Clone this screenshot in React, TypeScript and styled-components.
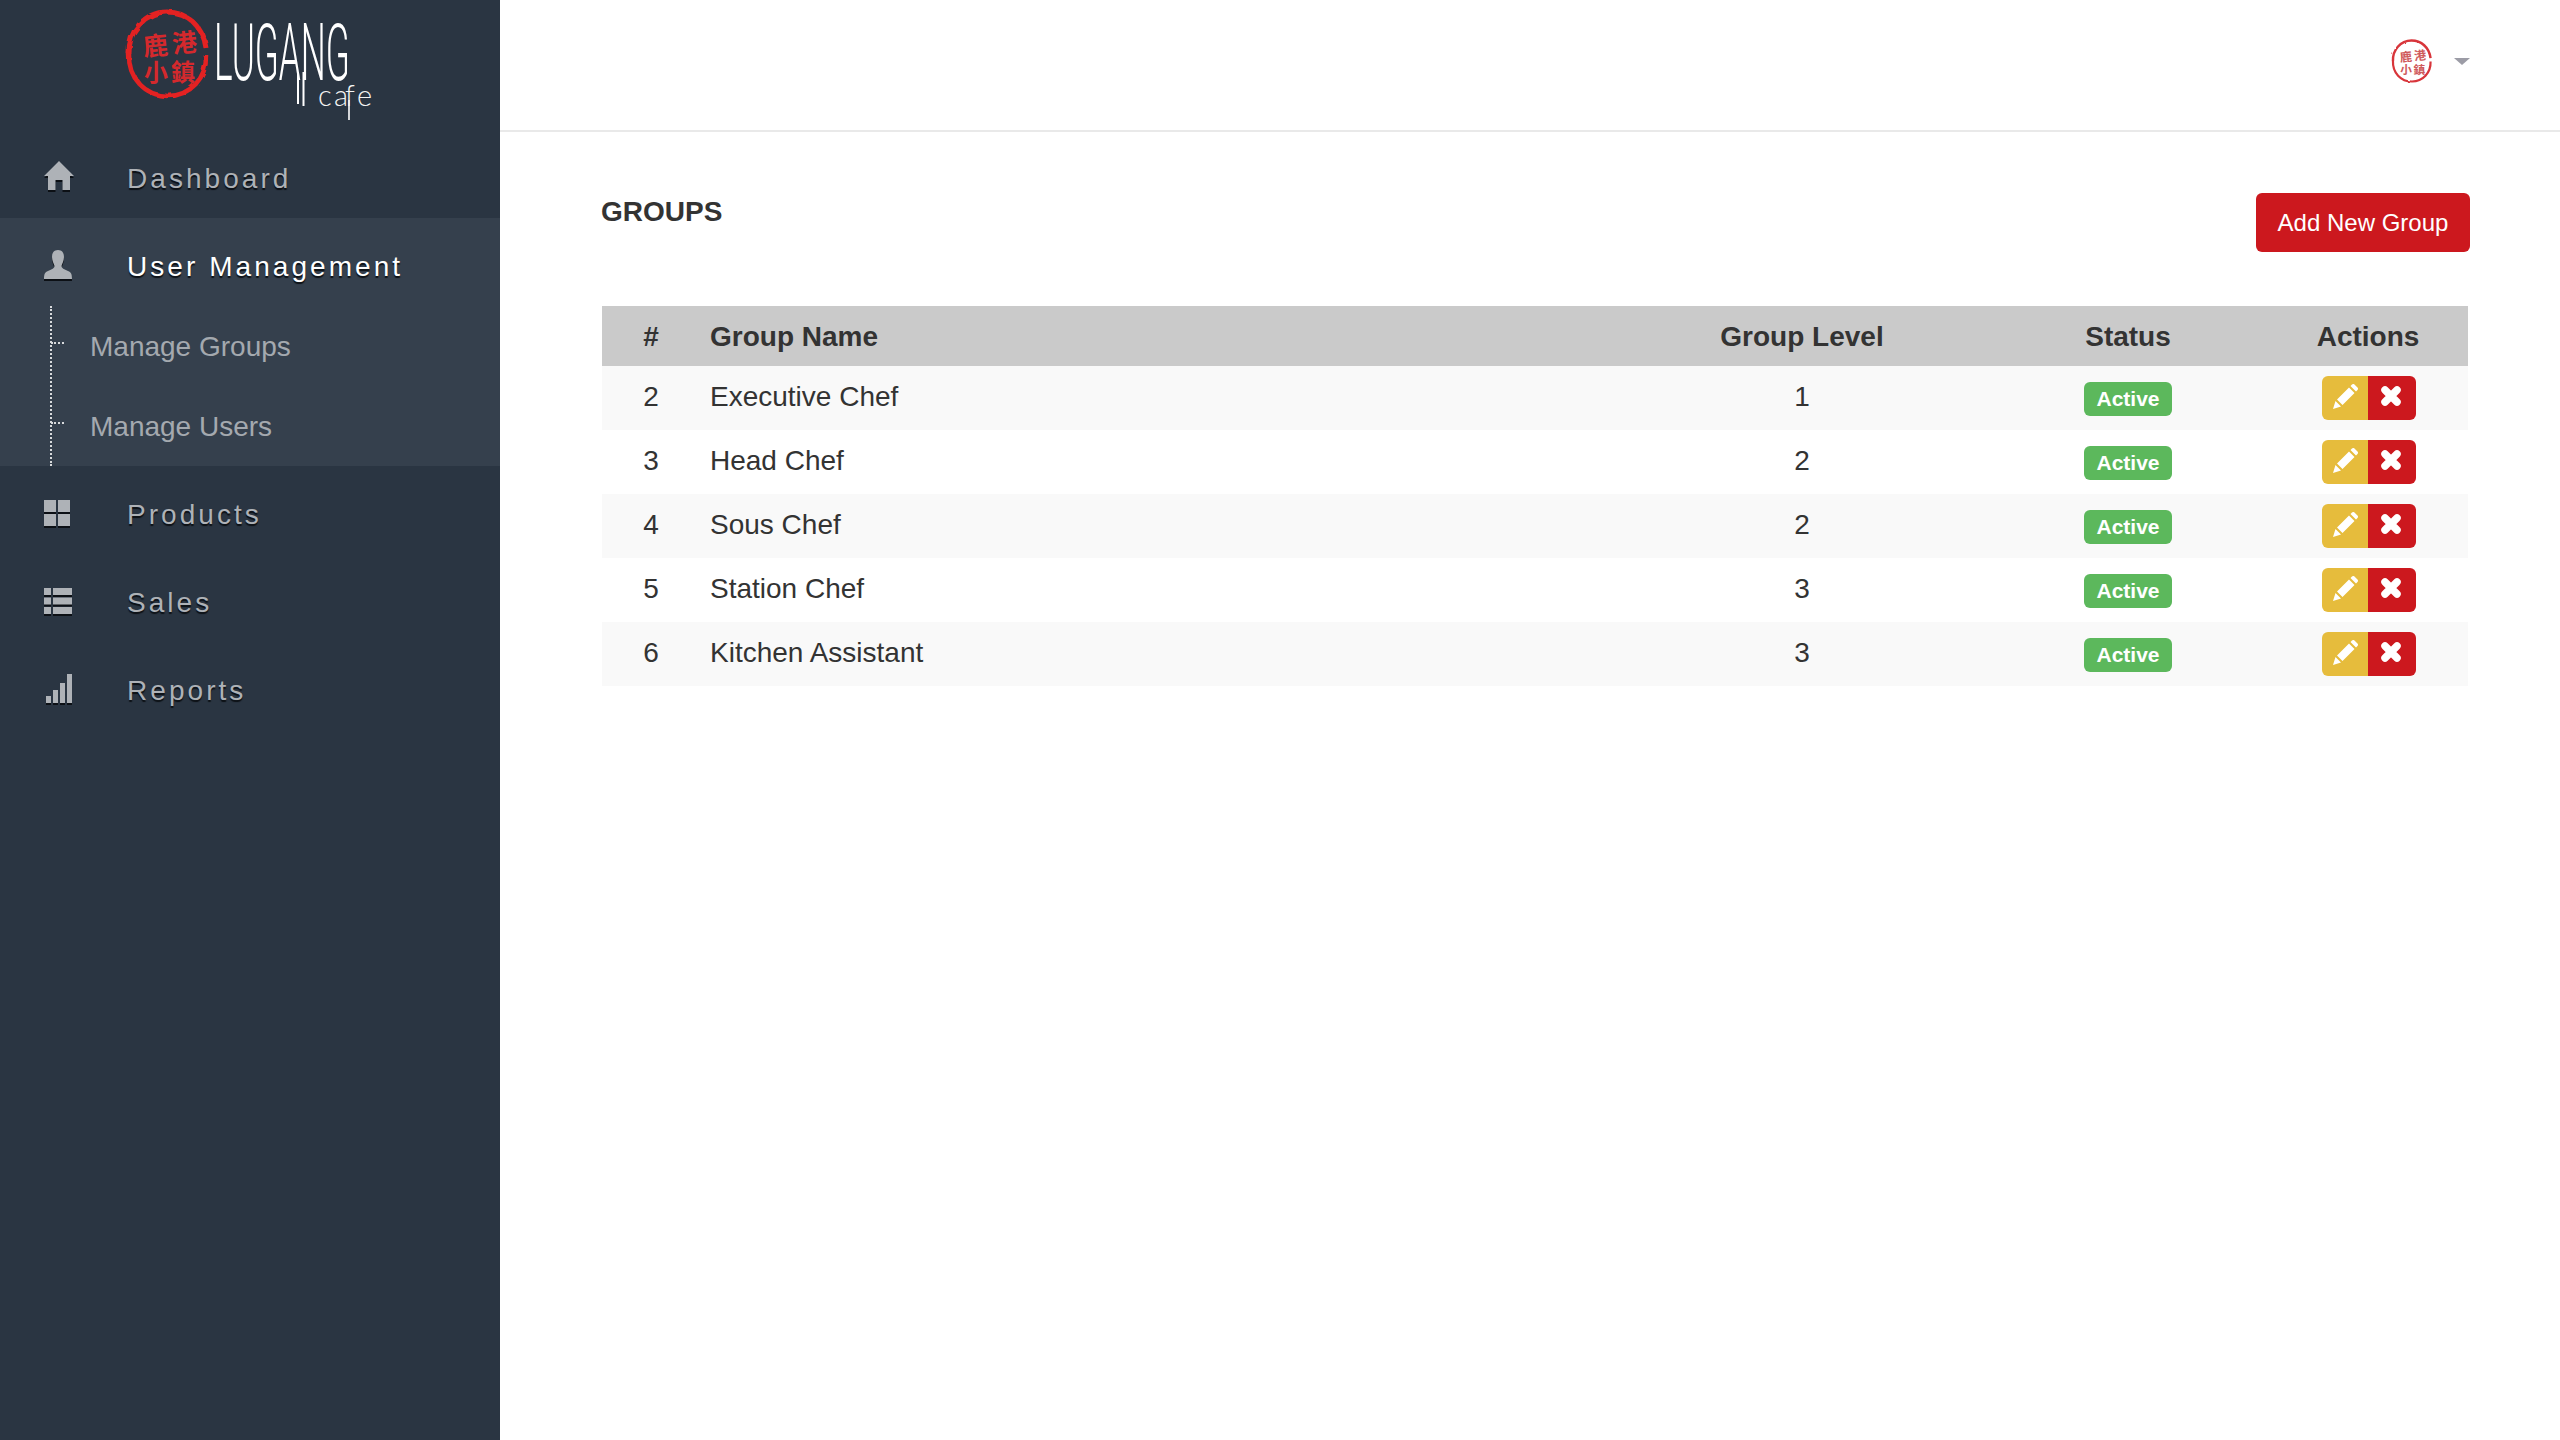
import React from "react";
import styled, { createGlobalStyle } from "styled-components";

const Global = createGlobalStyle`
  html, body { margin: 0; padding: 0; background: #fff; }
  body { font-family: "Liberation Sans", Arial, sans-serif; color: #333; }
  * { box-sizing: border-box; }
`;

const Page = styled.div`
  display: flex;
  width: 100%;
  min-height: 100vh;
`;

const Sidebar = styled.aside`
  flex: 0 0 500px;
  background: #2a3542;
`;

const LogoBar = styled.div`
  height: 130px;
  padding-top: 8px;
  display: flex;
  justify-content: center;
  align-items: flex-start;
  svg {
    overflow: visible;
  }
`;

const NavList = styled.nav`
  display: flex;
  flex-direction: column;
`;

const NavGroup = styled.div<{ $open?: boolean }>`
  background: ${(p) => (p.$open ? "#35404d" : "transparent")};
`;

const NavItem = styled.div<{ $active?: boolean }>`
  height: 88px;
  padding: 31px 0 21px 44px;
  display: flex;
  align-items: center;
  font-size: 28px;
  line-height: 36px;
  letter-spacing: 3.05px;
  color: ${(p) => (p.$active ? "#ffffff" : "#aeb2b7")};
  text-shadow: 0 2px 1px #0c1015;
`;

const IconSlot = styled.span<{ $lift: number }>`
  flex: 0 0 83px;
  display: flex;
  align-items: center;
  padding-bottom: ${(p) => p.$lift * 2}px;
  svg {
    display: block;
    fill: #aeb2b7;
    filter: drop-shadow(0 2px 0 #0c1015);
  }
`;

const SubList = styled.div`
  position: relative;
  padding-left: 90px;
  &::before {
    content: "";
    position: absolute;
    left: 50px;
    top: 0;
    bottom: 0;
    border-left: 2px dotted #d8dadc;
  }
`;

const SubItem = styled.div`
  position: relative;
  height: 80px;
  padding-top: 2px;
  display: flex;
  align-items: center;
  font-size: 28px;
  color: #a4a9af;
  &::before {
    content: "";
    position: absolute;
    left: -39px;
    top: 36px;
    width: 13px;
    border-top: 2px dotted #d8dadc;
  }
`;

const Main = styled.main`
  flex: 1;
  min-width: 0;
  display: flex;
  flex-direction: column;
`;

const TopBar = styled.header`
  height: 132px;
  padding: 0 90px 8px 0;
  display: flex;
  align-items: center;
  justify-content: flex-end;
  gap: 21px;
  border-bottom: 2px solid #e9e9e9;
`;

const Caret = styled.span`
  width: 0;
  height: 0;
  border-left: 8px solid transparent;
  border-right: 8px solid transparent;
  border-top: 7px solid #9c9ca6;
`;

const Content = styled.section`
  padding: 61px 90px 0 102px;
`;

const TitleRow = styled.div`
  display: flex;
  justify-content: space-between;
  align-items: flex-start;
  margin-bottom: 54px;
`;

const Title = styled.h3`
  margin: 0;
  font-size: 28px;
  line-height: 38px;
  font-weight: 700;
  color: #333;
  margin-left: -1px;
`;

const AddButton = styled.button`
  width: 214px;
  height: 59px;
  padding: 0;
  border: 0;
  border-radius: 6px;
  background: #cc181e;
  color: #fff;
  font: 400 24px "Liberation Sans", Arial, sans-serif;
`;

const Table = styled.table`
  width: 1866px;
  border-collapse: collapse;
  table-layout: fixed;
  font-size: 28px;
  color: #333;
`;

const HeadRow = styled.tr`
  background: #cacaca;
  height: 60px;
`;

const Th = styled.th<{ $left?: boolean; $first?: boolean }>`
  padding: 2px 0 0 ${(p) => (p.$left ? "12px" : p.$first ? "2px" : "0")};
  text-align: ${(p) => (p.$left ? "left" : "center")};
  font-weight: 700;
  line-height: 40px;
`;

const Row = styled.tr<{ $odd: boolean }>`
  height: 64px;
  background: ${(p) => (p.$odd ? "#f9f9f9" : "#ffffff")};
`;

const Td = styled.td<{ $left?: boolean; $first?: boolean }>`
  padding: 0 0 2px ${(p) => (p.$left ? "12px" : p.$first ? "2px" : "0")};
  text-align: ${(p) => (p.$left ? "left" : "center")};
  line-height: 40px;
`;

const Badge = styled.span`
  display: inline-block;
  width: 88px;
  height: 34px;
  line-height: 34px;
  border-radius: 6px;
  background: #5cb85c;
  color: #fff;
  font-size: 21px;
  font-weight: 700;
  vertical-align: middle;
`;

const ActionGroup = styled.div`
  display: inline-flex;
  vertical-align: middle;
  margin: 2px 0 0 2px;
`;

const ActionButton = styled.button<{ $kind: "edit" | "remove" }>`
  width: ${(p) => (p.$kind === "edit" ? "46px" : "48px")};
  height: 44px;
  padding: 0 ${(p) => (p.$kind === "edit" ? "0" : "3px")} 4px 0;
  border: 0;
  display: flex;
  align-items: center;
  justify-content: center;
  background: ${(p) => (p.$kind === "edit" ? "#e6bc3c" : "#cc181e")};
  border-radius: ${(p) => (p.$kind === "edit" ? "6px 0 0 6px" : "0 6px 6px 0")};
  svg {
    display: block;
    fill: #fff;
  }
`;

const SealChar = styled.text`
  font-family: "Noto Sans CJK TC", "Noto Sans CJK SC", sans-serif;
  font-weight: 700;
`;

const LogoWord = styled.text`
  font-family: Roboto, "Liberation Sans", sans-serif;
  font-weight: 300;
  fill: #fff;
`;

const LogoSub = styled.text`
  font-family: Lato, Roboto, sans-serif;
  font-weight: 300;
  fill: #f4f4f4;
`;

const Seal = ({ id, color, textColor }: { id: string; color: string; textColor: string }) => (
  <>
    <filter id={id} x="-10%" y="-10%" width="120%" height="120%">
      <feTurbulence type="fractalNoise" baseFrequency="0.09" numOctaves="2" seed="4" />
      <feDisplacementMap in="SourceGraphic" scale="4" />
    </filter>
    <g filter={`url(#${id})`} fill="none" stroke={color} strokeWidth="5">
      <path d="M207 48 C204 26 188 12 168 12 C145 12 129 32 130 54" />
      <path d="M130 54 C129 78 146 96 169 96 C191 96 208 78 207 55" strokeWidth="4.5" />
    </g>
    <g fill={textColor} fontSize="25">
      <SealChar x="144" y="55" transform="rotate(-6 156 45)">鹿</SealChar>
      <SealChar x="173" y="52" transform="rotate(-6 185 42)">港</SealChar>
      <SealChar x="145" y="81" fontSize="24">小</SealChar>
      <SealChar x="172" y="81" fontSize="24">鎮</SealChar>
    </g>
  </>
);

const Logo = () => (
  <svg width="252" height="115" viewBox="125 8 252 115">
    <Seal id="seal-rough" color="#e32024" textColor="#d4292d" />
    <LogoWord fontSize="80" transform="translate(215 80) scale(0.44 1)">
      LUGANG
    </LogoWord>
    <g stroke="#fff" strokeWidth="2" fill="none">
      <path d="M299 72 V104 M304.500 72 V106" />
      <path d="M350 100 V120" strokeWidth="1.6" />
    </g>
    <LogoSub x="319 335 346 358" y="106" fontSize="29">
      cafe
    </LogoSub>
  </svg>
);

const Avatar = () => (
  <svg width="42" height="46" viewBox="126 8 86 92">
    <Seal id="seal-avatar" color="#d8353a" textColor="#cf5a5c" />
  </svg>
);

const HomeIcon = () => (
  <svg width="30" height="30" viewBox="0 0 30 30">
    <path d="M15 0 L30 15 L26 15 L26 29 L18.500 29 L18.500 19 L11.500 19 L11.500 29 L4 29 L4 15 L0 15 Z" />
  </svg>
);
const UserIcon = () => (
  <svg width="28" height="29" viewBox="0 0 28 29">
    <path d="M14 0 C18.500 0 20 3.500 20 7 C20 11 18 14 17.500 16 C17.500 18 20 19.500 24 21 C27 22 28 24 28 29 L0 29 C0 24 1 22 4 21 C8 19.500 10.500 18 10.500 16 C10 14 8 11 8 7 C8 3.500 9.500 0 14 0 Z" />
  </svg>
);
const GridIcon = () => (
  <svg width="26" height="26" viewBox="0 0 26 26">
    <rect x="0" y="0" width="12" height="12" />
    <rect x="14" y="0" width="12" height="12" />
    <rect x="0" y="14" width="12" height="12" />
    <rect x="14" y="14" width="12" height="12" />
  </svg>
);
const ListIcon = () => (
  <svg width="28" height="26" viewBox="0 0 28 26">
    <rect x="0" y="0" width="7" height="7" />
    <rect x="9" y="0" width="19" height="7" />
    <rect x="0" y="9.500" width="7" height="7" />
    <rect x="9" y="9.500" width="19" height="7" />
    <rect x="0" y="19" width="7" height="7" />
    <rect x="9" y="19" width="19" height="7" />
  </svg>
);
const SignalIcon = () => (
  <svg width="28" height="29" viewBox="0 0 28 29">
    <rect x="2" y="22" width="5" height="7" />
    <rect x="9" y="16" width="5" height="13" />
    <rect x="16" y="9" width="5" height="20" />
    <rect x="23" y="0" width="5" height="29" />
  </svg>
);
const PencilIcon = () => (
  <svg width="25" height="25" viewBox="0 0 25 25">
    <path d="M0 25 L2.500 17 L8 22.500 Z M4 15.500 L16 3.500 L21.500 9 L9.500 21 Z M17.500 2 L19 0.500 C19.800 -0.200 20.800 -0.200 21.500 0.500 L24.500 3.500 C25.200 4.200 25.200 5.200 24.500 6 L23 7.500 Z" />
  </svg>
);
const CrossIcon = () => (
  <svg width="22" height="22" viewBox="0 0 22 22">
    <path d="M5 5 L17 17 M17 5 L5 17" stroke="#fff" strokeWidth="7.500" strokeLinecap="round" fill="none" />
  </svg>
);

const groups = [
  { id: 2, name: "Executive Chef", level: 1 },
  { id: 3, name: "Head Chef", level: 2 },
  { id: 4, name: "Sous Chef", level: 2 },
  { id: 5, name: "Station Chef", level: 3 },
  { id: 6, name: "Kitchen Assistant", level: 3 },
];

export default function App() {
  return (
    <Page>
      <Global />
      <Sidebar>
        <LogoBar>
          <Logo />
        </LogoBar>
        <NavList>
          <NavItem>
            <IconSlot $lift={3}>
              <HomeIcon />
            </IconSlot>
            Dashboard
          </NavItem>
          <NavGroup $open>
            <NavItem $active>
              <IconSlot $lift={3}>
                <UserIcon />
              </IconSlot>
              User Management
            </NavItem>
            <SubList>
              <SubItem>Manage Groups</SubItem>
              <SubItem>Manage Users</SubItem>
            </SubList>
          </NavGroup>
          <NavItem>
            <IconSlot $lift={2}>
              <GridIcon />
            </IconSlot>
            Products
          </NavItem>
          <NavItem>
            <IconSlot $lift={2}>
              <ListIcon />
            </IconSlot>
            Sales
          </NavItem>
          <NavItem>
            <IconSlot $lift={3}>
              <SignalIcon />
            </IconSlot>
            Reports
          </NavItem>
        </NavList>
      </Sidebar>
      <Main>
        <TopBar>
          <Avatar />
          <Caret />
        </TopBar>
        <Content>
          <TitleRow>
            <Title>GROUPS</Title>
            <AddButton>Add New Group</AddButton>
          </TitleRow>
          <Table>
            <colgroup>
              <col width="96" />
              <col width="918" />
              <col width="372" />
              <col width="280" />
              <col width="200" />
            </colgroup>
            <thead>
              <HeadRow>
                <Th $first>#</Th>
                <Th $left>Group Name</Th>
                <Th>Group Level</Th>
                <Th>Status</Th>
                <Th>Actions</Th>
              </HeadRow>
            </thead>
            <tbody>
              {groups.map((g, i) => (
                <Row key={g.id} $odd={i % 2 === 0}>
                  <Td $first>{g.id}</Td>
                  <Td $left>{g.name}</Td>
                  <Td>{g.level}</Td>
                  <Td>
                    <Badge>Active</Badge>
                  </Td>
                  <Td>
                    <ActionGroup>
                      <ActionButton $kind="edit">
                        <PencilIcon />
                      </ActionButton>
                      <ActionButton $kind="remove">
                        <CrossIcon />
                      </ActionButton>
                    </ActionGroup>
                  </Td>
                </Row>
              ))}
            </tbody>
          </Table>
        </Content>
      </Main>
    </Page>
  );
}
